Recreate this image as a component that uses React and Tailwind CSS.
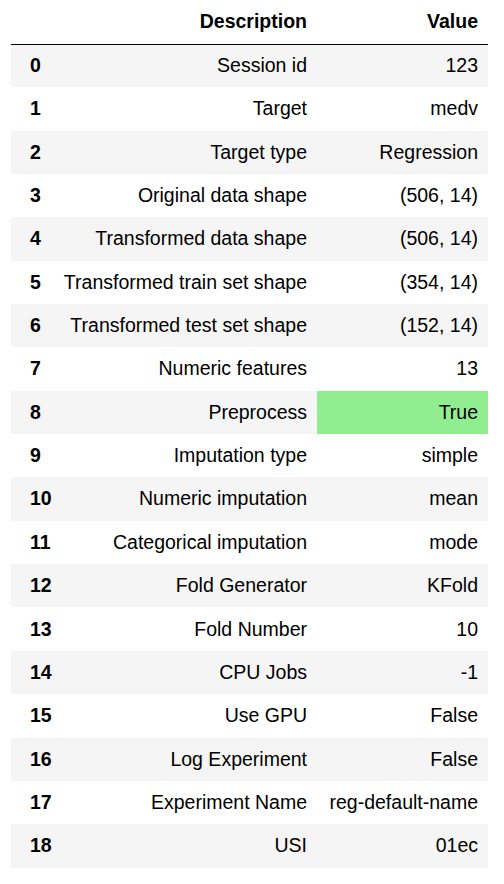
// App.jsx
const rows = [
  ['Session id', '123'],
  ['Target', 'medv'],
  ['Target type', 'Regression'],
  ['Original data shape', '(506, 14)'],
  ['Transformed data shape', '(506, 14)'],
  ['Transformed train set shape', '(354, 14)'],
  ['Transformed test set shape', '(152, 14)'],
  ['Numeric features', '13'],
  ['Preprocess', 'True'],
  ['Imputation type', 'simple'],
  ['Numeric imputation', 'mean'],
  ['Categorical imputation', 'mode'],
  ['Fold Generator', 'KFold'],
  ['Fold Number', '10'],
  ['CPU Jobs', '-1'],
  ['Use GPU', 'False'],
  ['Log Experiment', 'False'],
  ['Experiment Name', 'reg-default-name'],
  ['USI', '01ec'],
];

export default function App() {
  return (
    <div className="min-h-[884px] w-[504px] bg-white pl-[11px] font-['Liberation_Sans',Arial,sans-serif] text-[19.5px] text-black">
      <table className="w-[477px] table-fixed border-collapse">
        <colgroup>
          <col className="w-[41px]" />
          <col className="w-[265px]" />
          <col className="w-[171px]" />
        </colgroup>
        <thead>
          <tr className="h-[44px] border-b-[1.5px] border-black">
            <th />
            <th className="pr-[10px] text-right font-bold">Description</th>
            <th className="pr-[10px] text-right font-bold">Value</th>
          </tr>
        </thead>
        <tbody>
          {rows.map(([desc, val], i) => (
            <tr key={i} className={`h-[43.35px] ${i % 2 === 0 ? 'bg-[#f5f5f5]' : 'bg-white'}`}>
              <th className="pl-[19px] text-left font-bold whitespace-nowrap">{i}</th>
              <td className="pr-[10px] text-right whitespace-nowrap">{desc}</td>
              <td className={`pr-[10px] text-right whitespace-nowrap ${desc === 'Preprocess' ? 'bg-[#90ee90]' : ''}`}>{val}</td>
            </tr>
          ))}
        </tbody>
      </table>
    </div>
  );
}
